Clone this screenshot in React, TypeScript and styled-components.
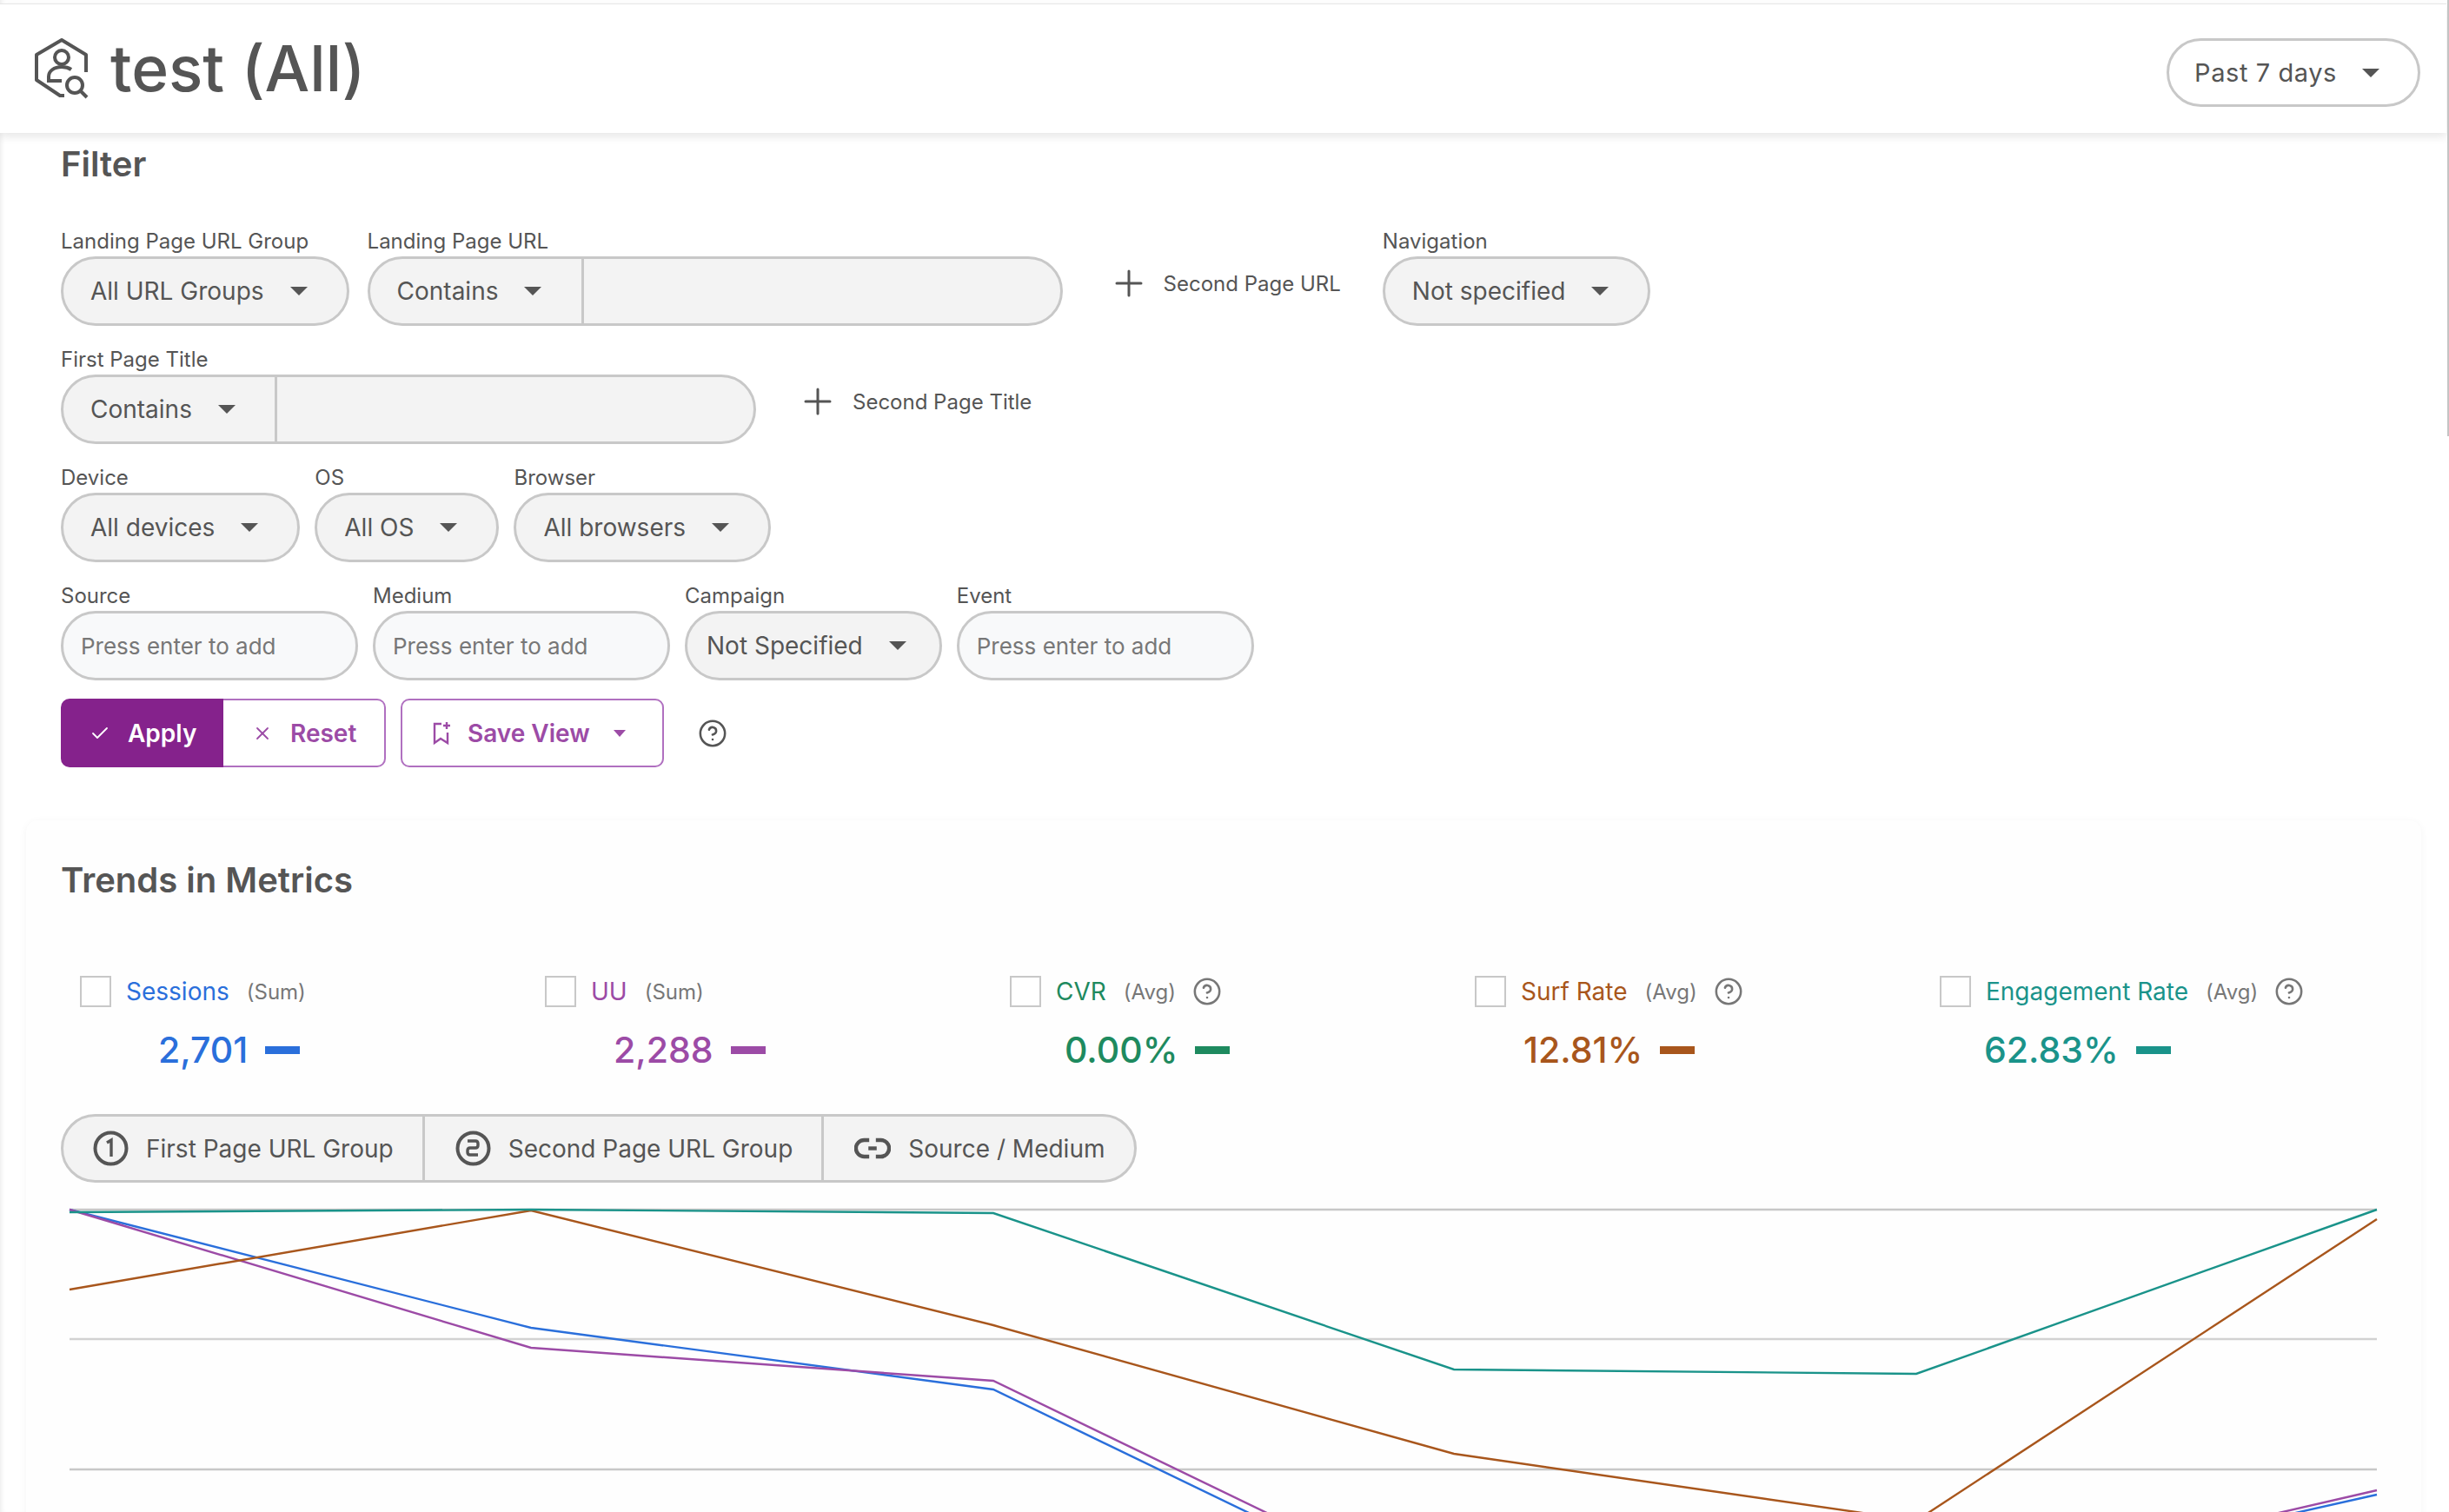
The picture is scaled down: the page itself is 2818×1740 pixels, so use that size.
import { CircleHelp, Check, X, Plus } from "lucide-react";
import styled, { createGlobalStyle } from "styled-components";

const GlobalStyle = createGlobalStyle`
  html, body {
    margin: 0;
    height: 100%;
    overflow: hidden;
    background: #fff;
  }
  * {
    box-sizing: border-box;
  }
  body {
    font-family: Inter, "Noto Sans", sans-serif;
    color: #555;
  }
`;

const metrics = [
  { name: "Sessions", kind: "(Sum)", value: "2,701", color: "#2a6fdb", indent: 90, help: false },
  { name: "UU", kind: "(Sum)", value: "2,288", color: "#9c4ba6", indent: 79, help: false },
  { name: "CVR", kind: "(Avg)", value: "0.00%", color: "#1e8a5f", indent: 63, help: true },
  { name: "Surf Rate", kind: "(Avg)", value: "12.81%", color: "#a8561c", indent: 56, help: true },
  { name: "Engagement Rate", kind: "(Avg)", value: "62.83%", color: "#1a938a", indent: 51, help: true },
];

const series = [
  { color: "#2a6fdb", points: "80,1391 611,1527 1143,1598 1673,1854 2205,1838 2735,1719" },
  { color: "#9c4ba6", points: "80,1391 611,1550 1143,1588 1673,1844 2205,1836 2735,1714" },
  { color: "#a8561c", points: "80,1483 611,1392 1143,1524 1673,1672 2205,1749 2735,1402" },
  { color: "#1a938a", points: "80,1394 611,1391 1143,1395 1673,1575 2205,1580 2735,1391" },
];

function SelectBox(props: { value: string; tight?: boolean }) {
  return (
    <Select $tight={props.tight}>
      {props.value}
      <Caret />
    </Select>
  );
}

function MatchGroup(props: { width: number }) {
  return (
    <GroupPill $width={props.width}>
      <GroupSelect>
        Contains
        <Caret />
      </GroupSelect>
    </GroupPill>
  );
}

function AddLink(props: { label: string }) {
  return (
    <AddButton>
      <Plus size={48} strokeWidth={1.5} />
      {props.label}
    </AddButton>
  );
}

function HeaderIcon() {
  return (
    <svg width="62" height="70" viewBox="9 13 62 70" fill="none" stroke="#555" strokeWidth="4">
      <path d="M68 52V32L40 15 11 32v29l27 18h5" strokeLinejoin="round" />
      <circle cx="40" cy="35" r="8" />
      <path d="M51 49c-3-2-7-3-11-3-9 0-15 5-15 11v5h15" />
      <circle cx="55" cy="67" r="9" />
      <path d="M62 74l7 7" />
    </svg>
  );
}

function BookmarkIcon() {
  return (
    <svg width="22" height="28" viewBox="0 0 22 28" fill="none" stroke="#9c4ba6" strokeWidth="2.4">
      <path d="M11 3H3v22l7-5 8 5V13" />
      <path d="M17 1v8M13 5h8" />
    </svg>
  );
}

function NumberIcon(props: { digit: 1 | 2 }) {
  return (
    <svg width="41" height="41" viewBox="0 0 41 41" fill="none" stroke="#555" strokeWidth="4">
      <circle cx="20.5" cy="20.5" r="18" />
      {props.digit === 1 ? (
        <path d="M16 14l5-3v19" strokeWidth="3.4" />
      ) : (
        <path d="M14 12h9q3 0 3 3v2q0 3-3 3h-6q-3 0-3 3v2q0 3 3 3h9" strokeWidth="3.4" />
      )}
    </svg>
  );
}

function LinkIcon() {
  return (
    <svg width="42" height="25" viewBox="1 5.5 22 13" fill="none" stroke="#555" strokeWidth="2.3">
      <path d="M10 17H7A5 5 0 0 1 7 7h3" />
      <path d="M14 7h3a5 5 0 0 1 0 10h-3" />
      <path d="M9.5 12h5" />
    </svg>
  );
}

export default function App() {
  return (
    <Page>
      <GlobalStyle />
      <Scrollbar />
      <Header>
        <TitleWrap>
          <HeaderIcon />
          <Title>test (All)</Title>
        </TitleWrap>
        <PeriodSelect>
          Past 7 days
          <Caret />
        </PeriodSelect>
      </Header>

      <FilterSection>
        <SectionTitle>Filter</SectionTitle>
        <FilterRows>
          <FilterRow $gap={21}>
            <Field>
              <FieldLabel>Landing Page URL Group</FieldLabel>
              <SelectBox value="All URL Groups" />
            </Field>
            <Field>
              <FieldLabel>Landing Page URL</FieldLabel>
              <MatchGroup width={800} />
            </Field>
            <AddSlot $offset={31}>
              <AddLink label="Second Page URL" />
            </AddSlot>
            <NavField>
              <FieldLabel>Navigation</FieldLabel>
              <SelectBox value="Not specified" />
            </NavField>
          </FilterRow>

          <FilterRow>
            <Field>
              <FieldLabel>First Page Title</FieldLabel>
              <MatchGroup width={800} />
            </Field>
            <AddSlot $offset={30}>
              <AddLink label="Second Page Title" />
            </AddSlot>
          </FilterRow>

          <FilterRow>
            <Field>
              <FieldLabel>Device</FieldLabel>
              <SelectBox value="All devices" />
            </Field>
            <Field>
              <FieldLabel>OS</FieldLabel>
              <SelectBox value="All OS" />
            </Field>
            <Field>
              <FieldLabel>Browser</FieldLabel>
              <SelectBox value="All browsers" />
            </Field>
          </FilterRow>

          <FilterRow>
            <Field>
              <FieldLabel>Source</FieldLabel>
              <TextInput placeholder="Press enter to add" />
            </Field>
            <Field>
              <FieldLabel>Medium</FieldLabel>
              <TextInput placeholder="Press enter to add" />
            </Field>
            <Field>
              <FieldLabel>Campaign</FieldLabel>
              <SelectBox value="Not Specified" tight />
            </Field>
            <Field>
              <FieldLabel>Event</FieldLabel>
              <TextInput placeholder="Press enter to add" />
            </Field>
          </FilterRow>
        </FilterRows>

        <ActionRow>
          <ApplyButton>
            <Check size={24} strokeWidth={1.8} />
            Apply
          </ApplyButton>
          <ResetButton>
            <X size={24} strokeWidth={1.8} />
            Reset
          </ResetButton>
          <SaveButton>
            <BookmarkIcon />
            Save View
            <SmallCaret />
          </SaveButton>
          <ActionHelp>
            <CircleHelp size={34} strokeWidth={1.8} />
          </ActionHelp>
        </ActionRow>
      </FilterSection>

      <Card>
        <SectionTitle>Trends in Metrics</SectionTitle>
        <MetricGrid>
          {metrics.map((m) => (
            <Metric key={m.name}>
              <MetricHead>
                <CheckBox />
                <MetricName $color={m.color}>{m.name}</MetricName>
                <MetricKind>{m.kind}</MetricKind>
                {m.help && (
                  <MetricHelp>
                    <CircleHelp size={34} strokeWidth={1.8} />
                  </MetricHelp>
                )}
              </MetricHead>
              <MetricValue $color={m.color} $indent={m.indent}>
                {m.value}
                <MetricDash $color={m.color} />
              </MetricValue>
            </Metric>
          ))}
        </MetricGrid>

        <TabGroup>
          <Tab>
            <NumberIcon digit={1} />
            First Page URL Group
          </Tab>
          <Tab>
            <NumberIcon digit={2} />
            Second Page URL Group
          </Tab>
          <Tab>
            <LinkIcon />
            Source / Medium
          </Tab>
        </TabGroup>

        <Chart viewBox="70 1380 2666 360" width="2666" height="360">
          <line x1="80" x2="2735" y1="1391" y2="1391" stroke="#c8c8c8" strokeWidth="2.5" />
          <line x1="80" x2="2735" y1="1540" y2="1540" stroke="#d2d2d2" strokeWidth="2.5" />
          <line x1="80" x2="2735" y1="1690" y2="1690" stroke="#c8c8c8" strokeWidth="2.5" />
          {series.map((s) => (
            <polyline key={s.color} points={s.points} fill="none" stroke={s.color} strokeWidth="2.4" />
          ))}
        </Chart>
      </Card>
    </Page>
  );
}

const Page = styled.div`
  position: relative;
  width: 2818px;
  height: 1740px;
  padding-top: 4px;
  overflow: hidden;
  box-shadow: inset 5px 0 5px -3px #eee;
`;

const Scrollbar = styled.div`
  position: absolute;
  top: 0;
  right: 0;
  width: 2px;
  height: 502px;
  background: #c4c4c4;
  z-index: 5;
`;

const Header = styled.header`
  display: flex;
  align-items: center;
  justify-content: space-between;
  height: 149px;
  margin-right: 3px;
  padding: 0 30px 0 40px;
  background: #fff;
  border-top: 1px solid #e6e6e6;
  box-shadow: 0 4px 10px rgba(0, 0, 0, 0.1);
`;

const TitleWrap = styled.div`
  display: flex;
  align-items: center;
  gap: 25px;
`;

const Title = styled.h1`
  margin: 0;
  font-size: 73px;
  font-weight: 500;
  line-height: 80px;
  color: #555;
`;

const Caret = styled.span`
  width: 0;
  height: 0;
  border-left: 10px solid transparent;
  border-right: 10px solid transparent;
  border-top: 10px solid #555;
`;

const SmallCaret = styled.span`
  width: 0;
  height: 0;
  margin-left: 8px;
  border-left: 7px solid transparent;
  border-right: 7px solid transparent;
  border-top: 8px solid #9c4ba6;
`;

const PeriodSelect = styled.div`
  display: flex;
  align-items: center;
  gap: 29px;
  height: 79px;
  margin-top: 9px;
  padding: 0 44px 0 29px;
  border: 3px solid #c8c8c8;
  border-radius: 40px;
  font-size: 29px;
  letter-spacing: 0.02em;
`;

const FilterSection = styled.section`
  padding: 13px 70px 0;
`;

const SectionTitle = styled.h2`
  margin: 0;
  font-size: 40px;
  font-weight: 600;
  line-height: 46px;
  color: #555;
`;

const FilterRows = styled.div`
  display: flex;
  flex-direction: column;
  gap: 25px;
  margin-top: 52px;
`;

const FilterRow = styled.div<{ $gap?: number }>`
  display: flex;
  gap: ${(p) => p.$gap ?? 17}px;
`;

const Field = styled.div`
  display: flex;
  flex-direction: column;
`;

const NavField = styled(Field)`
  margin-left: 27px;
`;

const FieldLabel = styled.label`
  height: 31px;
  font-size: 24px;
  line-height: 27px;
  color: #555;
`;

const Select = styled.div<{ $tight?: boolean }>`
  display: flex;
  align-items: center;
  gap: 30px;
  height: 80px;
  padding: 0 ${(p) => (p.$tight ? 38 : 45)}px 0 ${(p) => (p.$tight ? 22 : 31)}px;
  border: 3px solid #c8c8c8;
  border-radius: 40px;
  background: #f3f3f3;
  font-size: 28px;
  white-space: nowrap;
`;

const GroupPill = styled.div<{ $width: number }>`
  display: flex;
  width: ${(p) => p.$width}px;
  height: 80px;
  border: 3px solid #c8c8c8;
  border-radius: 40px;
  background: #f3f3f3;
`;

const GroupSelect = styled.div`
  display: flex;
  align-items: center;
  gap: 30px;
  width: 246px;
  padding-left: 31px;
  border-right: 3px solid #c8c8c8;
  font-size: 28px;
`;

const AddSlot = styled.div<{ $offset: number }>`
  display: flex;
  align-items: center;
  height: 80px;
  margin-top: 22px;
  margin-left: ${(p) => p.$offset}px;
`;

const AddButton = styled.div`
  display: flex;
  align-items: center;
  gap: 16px;
  font-size: 24px;
  white-space: nowrap;
`;

const TextInput = styled.input`
  width: 342px;
  height: 80px;
  padding: 0 20px;
  border: 3px solid #c8c8c8;
  border-radius: 40px;
  background: #f8f9fa;
  font-family: inherit;
  font-size: 26px;
  outline: none;

  &::placeholder {
    color: #777;
    opacity: 1;
  }
`;

const ActionRow = styled.div`
  display: flex;
  align-items: center;
  margin-top: 21px;
`;

const ActionButton = styled.button`
  display: flex;
  align-items: center;
  height: 79px;
  font-family: inherit;
  font-size: 28px;
  font-weight: 600;
  white-space: nowrap;
`;

const ApplyButton = styled(ActionButton)`
  width: 187px;
  gap: 20px;
  padding: 0 0 0 33px;
  border: 0;
  border-radius: 10px 0 0 10px;
  background: #85228c;
  color: #fff;
`;

const ResetButton = styled(ActionButton)`
  width: 187px;
  gap: 20px;
  padding: 0 0 0 33px;
  border: 2px solid #b070c0;
  border-left: 0;
  border-radius: 0 10px 10px 0;
  background: #fff;
  color: #9c4ba6;
`;

const SaveButton = styled(ActionButton)`
  width: 303px;
  gap: 19px;
  margin-left: 17px;
  padding: 0 0 0 34px;
  border: 2px solid #b070c0;
  border-radius: 10px;
  background: #fff;
  color: #9c4ba6;
`;

const ActionHelp = styled.div`
  display: flex;
  margin-left: 39px;
  color: #555;
`;

const Card = styled.section`
  height: 900px;
  margin: 61px 32px 0 30px;
  padding: 46px 0 0 40px;
  border-radius: 14px;
  background: #fefefe;
  box-shadow: 0 2px 10px rgba(0, 0, 0, 0.05);
`;

const MetricGrid = styled.div`
  display: grid;
  grid-template-columns: repeat(5, 535px);
  margin: 87px 0 0 22px;
`;

const Metric = styled.div`
  display: flex;
  flex-direction: column;
  gap: 24px;
`;

const MetricHead = styled.div`
  display: flex;
  align-items: center;
  height: 36px;
`;

const CheckBox = styled.span`
  width: 36px;
  height: 36px;
  border: 2px solid #c8c8c8;
  background: #fff;
`;

const MetricName = styled.span<{ $color: string }>`
  margin-left: 17px;
  font-size: 28px;
  color: ${(p) => p.$color};
  white-space: nowrap;
`;

const MetricKind = styled.span`
  margin-left: 20px;
  font-size: 24px;
  color: #777;
  white-space: nowrap;
`;

const MetricHelp = styled.span`
  display: flex;
  margin-left: 19px;
  color: #777;
`;

const MetricValue = styled.div<{ $color: string; $indent: number }>`
  display: flex;
  align-items: center;
  gap: 20px;
  height: 50px;
  margin-left: ${(p) => p.$indent}px;
  font-size: 41px;
  font-weight: 500;
  color: ${(p) => p.$color};
`;

const MetricDash = styled.span<{ $color: string }>`
  width: 40px;
  height: 9px;
  background: ${(p) => p.$color};
`;

const TabGroup = styled.div`
  display: inline-flex;
  height: 79px;
  margin-top: 49px;
  border: 3px solid #c8c8c8;
  border-radius: 40px;
  background: #f3f3f3;
`;

const Tab = styled.div`
  display: flex;
  align-items: center;
  gap: 20px;
  padding: 0 33px 0 35px;
  font-size: 28px;
  white-space: nowrap;

  &:first-child {
    padding-left: 34px;
  }

  &:not(:last-child) {
    border-right: 3px solid #c8c8c8;
  }
`;

const Chart = styled.svg`
  display: block;
  margin-top: 20px;
`;
